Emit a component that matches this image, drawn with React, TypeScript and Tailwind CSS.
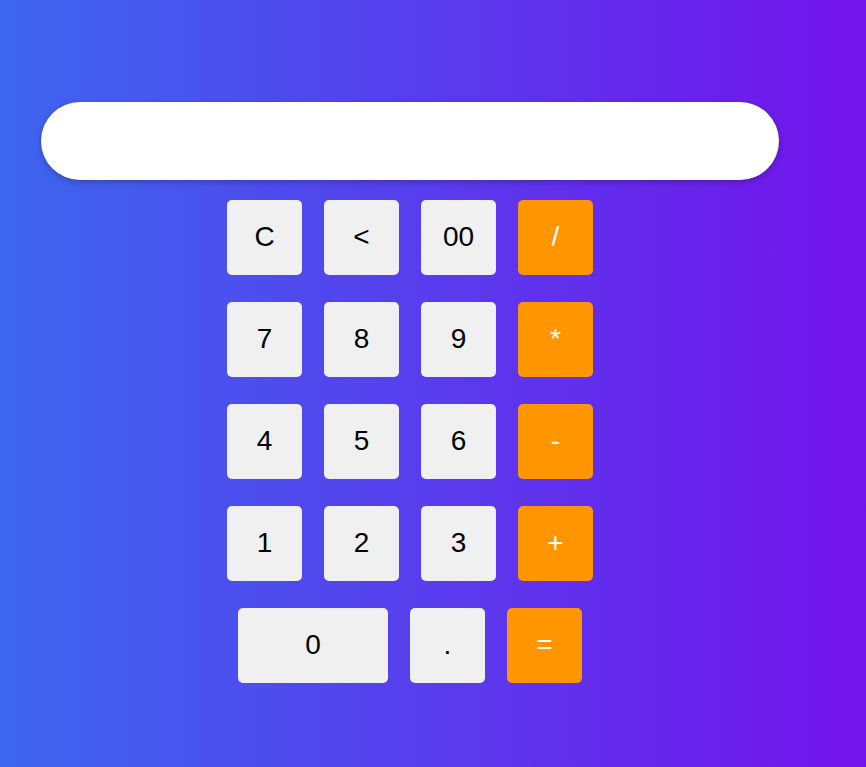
import React, { useState } from 'react';

const rows: string[][] = [
  ['C', '<', '00', '/'],
  ['7', '8', '9', '*'],
  ['4', '5', '6', '-'],
  ['1', '2', '3', '+'],
];

const ops = ['/', '*', '-', '+', '='];

const Key: React.FC<{ label: string; wide?: boolean; onPress: (k: string) => void }> = ({ label, wide, onPress }) => {
  const isOp = ops.includes(label);
  return (
    <button
      onClick={() => onPress(label)}
      className={`h-[75px] ${wide ? 'w-[150px]' : 'w-[75px]'} rounded-[5px] flex items-center justify-center pb-[2px] text-[28px] ${
        isOp ? 'bg-[#ff9500] text-white' : 'bg-[#f0f0f0] text-black'
      }`}
    >
      {label}
    </button>
  );
};

const App: React.FC = () => {
  const [value, setValue] = useState('');

  const press = (k: string) => {
    if (k === 'C') return setValue('');
    if (k === '<') return setValue((v) => v.slice(0, -1));
    if (k === '=') {
      try {
        // eslint-disable-next-line no-new-func
        setValue(String(Function(`return (${value || 0})`)()));
      } catch {
        setValue('Error');
      }
      return;
    }
    setValue((v) => v + k);
  };

  return (
    <div className="w-full h-[767px] overflow-hidden bg-linear-to-r/srgb from-[#3d66ef] to-[#7313eb] font-['Liberation_Sans',Arial,sans-serif]">
      <div className="w-[820px] pt-[102px] flex flex-col items-center">
        {/* Display */}
        <input
          readOnly
          value={value}
          className="w-[738px] h-[78px] rounded-full bg-white shadow-[0_2px_6px_rgba(0,0,0,0.25)] outline-none px-8 text-right text-[32px] text-black"
        />

        {/* Keypad */}
        <div className="mt-[20px] flex flex-col gap-[27px]">
          {rows.map((row, i) => (
            <div key={i} className="flex justify-center gap-[22px]">
              {row.map((k) => (
                <Key key={k} label={k} onPress={press} />
              ))}
            </div>
          ))}
          <div className="flex justify-center gap-[22px]">
            <Key label="0" wide onPress={press} />
            <Key label="." onPress={press} />
            <Key label="=" onPress={press} />
          </div>
        </div>
      </div>
    </div>
  );
};

export default App;
